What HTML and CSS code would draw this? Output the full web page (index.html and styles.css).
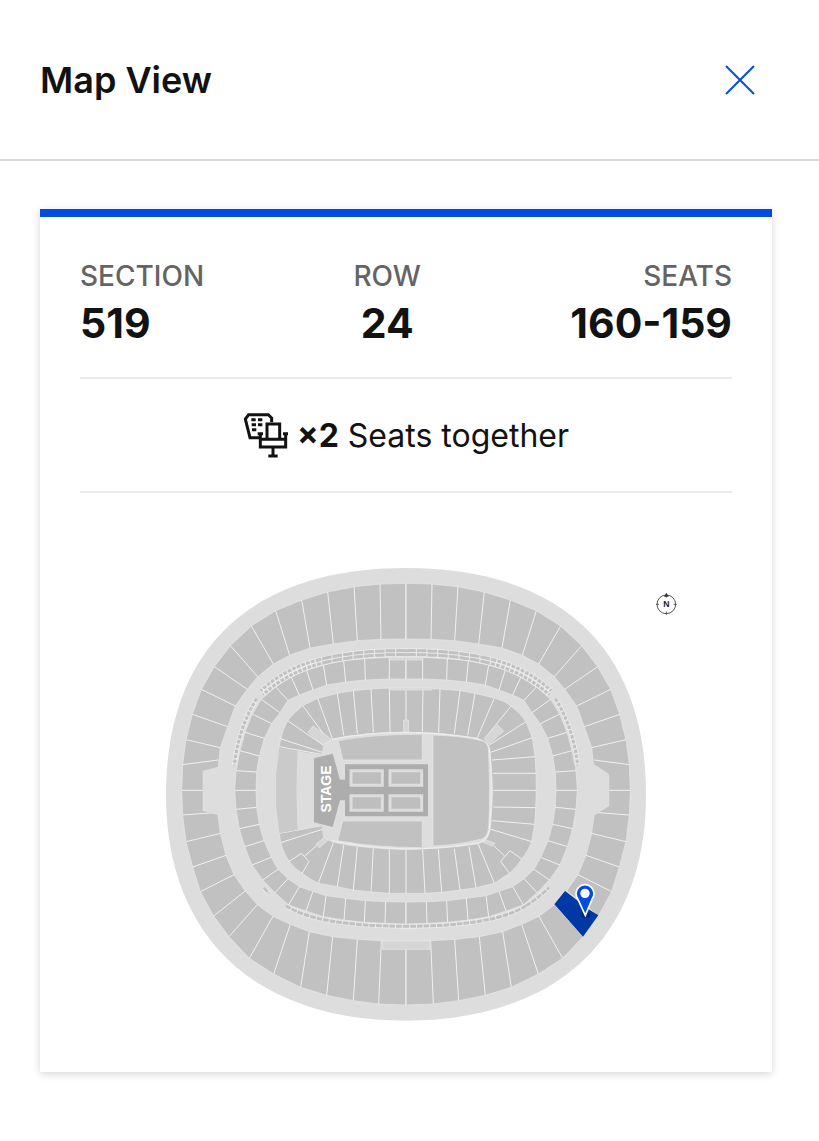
FILE: index.html
```html
<!DOCTYPE html>
<html lang="en">

<head>
    <meta charset="UTF-8">
    <meta name="viewport" content="width=device-width, initial-scale=1.0">
    <title>Map View</title>
    <link rel="stylesheet" href="styles.css">
</head>

<body>
    <header class="header">
        <h1 class="title">Map View</h1>
        <button class="close" type="button" aria-label="Close">
            <svg viewBox="0 0 32 32" width="32" height="32" aria-hidden="true">
                <path d="M2 2L30 30M30 2L2 30"/>
            </svg>
        </button>
    </header>

    <main class="card">
        <dl class="ticket">
            <div class="field">
                <dt>SECTION</dt>
                <dd>519</dd>
            </div>
            <div class="field field-center">
                <dt>ROW</dt>
                <dd>24</dd>
            </div>
            <div class="field field-right">
                <dt>SEATS</dt>
                <dd>160-159</dd>
            </div>
        </dl>

        <div class="together">
            <svg class="seat-icon" viewBox="45 65 138 138" aria-hidden="true">
                <path class="seat-line" d="M95 142H66L52 86L62 73H121L131 83V96"/>
                <path class="seat-fill" d="M70 84h13v9h-13zM90 84h13v9h-13zM71 99h13v9h-13zM90 99h13v9h-13zM72 114h13v9h-13z"/>
                <path class="seat-line" d="M117 145V101H155V145M89 130H105M97 130V170H173V130M165 130H180M97 147H173M135 170V196M121 197H149"/>
            </svg>
            <p><strong>×2</strong> Seats together</p>
        </div>

        <svg class="map" viewBox="-240 -60 1956 1476" role="img" aria-label="Stadium seating map">
            <defs>
                <!-- left half of the stands, reused flipped for the right half -->
                <g id="stand">
                    <path class="seats" d="M739 70L660 72L582 80L503 96L425 120L347 152L274 198L211 257L163 320L124 388L97 463L78 539L68 614L65 691L68 765L78 845L98 921L121 995L161 1068L207 1130L268 1195L341 1242L422 1282L500 1306L580 1322L656 1332L739 1335V1144L664 1142L592 1138L518 1130L448 1115L391 1093L339 1069L292 1034L256 993L222 944L198 886L181 820L174 765L171 691L174 628L181 563L203 500L226 438L262 388L293 350L340 312L389 286L450 264L520 252L592 242L663 238L739 237Z"/>
                    <path class="divider" d="M660 72L663 238M582 80L592 242M503 96L520 252M425 120L450 264M347 152L389 286M274 198L340 312M211 257L293 350M163 320L262 388M124 388L226 438M97 463L203 500M78 539L181 563M68 614L174 600M65 691H171M68 765L174 757M78 845L182 820M98 921L198 886M121 995L222 944M161 1068L256 993M207 1130L292 1034M268 1195L339 1069M341 1242L391 1093M422 1282L448 1115M500 1306L518 1130M580 1322L592 1138M656 1332L664 1142"/>
                    <path class="seats" d="M739 291L688 292L614 296L551 302L490 315L440 330L393 350L346 380L304 418L277 462L255 517L240 572L228 632L224 691L228 748L238 806L254 860L276 915L308 960L345 998L386 1035L438 1053L490 1070L552 1080L613 1087L675 1090L739 1092V1026L677 1025L616 1022L557 1015L498 1007L459 994L418 980L384 956L354 928L334 892L312 842L298 793L290 742L288 691L290 636L298 588L313 535L335 491L360 458L384 421L418 405L459 390L500 375L557 366L616 360L688 357H739Z"/>
                    <path class="divider" d="M688 292V357M614 296L616 360M551 302L557 366M490 315L500 375M440 330L459 390M393 350L418 405M346 380L384 421M304 418L360 458M277 462L335 491M255 517L313 535M240 572L298 588M228 632L290 636M224 691H288M228 748L290 742M238 806L298 793M254 860L312 842M276 915L334 892M308 960L354 928M345 998L384 956M386 1035L418 980M438 1053L459 994M490 1070L498 1007M552 1080L557 1015M613 1087L616 1022M675 1090L677 1025"/>
                    <path class="suite-edge" d="M738 272Q590 270 478 299Q380 322 302 392M738 284Q590 282 482 311Q386 336 308 404M290 416Q236 502 223 616M378 1037Q470 1098 738 1099"/>
                    <path class="suite suite-wide" d="M738 272Q590 270 478 299M738 284Q590 282 482 311"/>
                    <path class="suite suite-small" d="M478 299Q380 322 302 392M482 311Q386 336 308 404M290 416Q236 502 223 616"/>
                    <path class="suite suite-bottom" d="M378 1037Q470 1098 738 1099"/>
                </g>
            </defs>

            <path class="shell" d="M738 24C1191 24 1458 255 1458 705C1458 1130 1191 1382 738 1382C285 1382 18 1130 18 705C18 255 285 24 738 24Z"/>
            <use href="#stand"/>
            <use href="#stand" transform="translate(1476 0) scale(-1 1)"/>
            <path class="divider" d="M738 70V237M738 291V357M738 1026V1092M738 1168V1335"/>
            <path class="shell" d="M176 620L128 632V753L176 766L182 766V620Z"/>
            <path class="shell" d="M1296 612L1302 612L1348 643V738L1300 768H1294Z"/>
            <path class="suite-edge" d="M1098 1037Q1130 1018 1167 983M312 983L326 1000"/>
            <path class="suite suite-bottom" d="M1098 1037Q1130 1018 1167 983M312 983L326 1000"/>
            <path class="gate" d="M688 292H787V300H688ZM668 1143H810V1168H668Z"/>

            <!-- lower bowl -->
            <path class="seats" d="M738 387L688 384L633 387L580 392L532 400L473 415L428 437Q395 465 383 482Q364 516 358 560L348 640V740L358 820L362 848Q370 880 388 905Q405 927 430 942Q450 958 475 970L532 980L580 990L633 996L688 1000H795L845 997L900 990L948 983L1003 970L1048 940Q1072 920 1085 897Q1106 871 1115 845L1124 793L1127 743L1129 691L1128 640L1125 590L1117 533L1098 485Q1082 460 1053 438Q1033 422 1003 414L945 400L900 392L840 387Z"/>
            <path class="divider" d="M580 392L592 521M532 400L551 526M473 415L517 536M428 437L503 538M633 387L640 518M688 384L690 516M383 482L490 556M358 535L490 578M358 560L484 583M738 387V516M789 387L787 515M840 387L836 518M900 392L883 521M945 400L923 526M1003 414L952 533M1053 438L975 535M1098 485L988 555M1117 533L992 577M1125 590L996 600M1128 640L999 640M1129 691H1000M1127 743L1000 741M1124 793L997 782M1115 845L993 808M1085 897L1050 872L1022 904L1048 940M1034 888L1002 858M1003 970L955 853M948 983L927 860M900 990L883 866M845 997L835 868M795 1000L788 870M738 1000V868M688 1000V868M633 996L640 865M580 990L592 860M532 980L551 855M475 970L520 848M358 820L484 797M362 848L490 807M386 905L425 880L447 905L425 942M434 888L470 857"/>
            <path class="closed" d="M358 562L412 573L409 691L412 810L358 820L349 740V640Z"/>
            <path class="shell" d="M412 573L484 585L490 556L500 538L517 536Q620 515 738 515Q850 515 952 533L982 548L992 577L1000 691L993 808L982 835L955 853Q850 869 738 869Q610 868 520 848L490 835L484 797L412 810L409 691Z"/>
            <path class="gate" d="M444 517L459 498L515 538L488 555ZM1013 495L1031 514L986 553L972 535ZM731 480H746V518H731ZM688 384H815V390H688ZM467 853L493 832L505 840L478 863ZM978 840L1005 850L997 859L968 846Z"/>
            <path class="field-edge" d="M515 538Q620 517 738 517Q850 517 952 537Q982 545 988 565Q1000 691 988 812Q982 840 960 848Q850 867 738 867Q620 865 515 842"/>
            <path class="seats" d="M535 542Q640 522 787 523V600H548ZM548 783H787V863Q650 863 533 842ZM819 525Q910 528 965 542Q983 547 985 565Q992 691 986 800Q984 830 965 837Q900 855 819 858Z"/>

            <!-- stage and pits -->
            <path class="stage" d="M462 595L518 581L540 659H555V613H804V769H555V721H540L518 801L462 787Z"/>
            <path class="pit" d="M573 632H667V676H573ZM690 632H785V676H690ZM573 707H667V751H573ZM690 707H785V751H690Z"/>
            <text class="stage-text" transform="translate(513 687) rotate(-90)">STAGE</text>

            <path class="selected" d="M1215 993L1183 1033L1269 1130L1315 1066L1286 1048Z"/>
            <ellipse class="pin-shadow" cx="1276" cy="1065" rx="17" ry="10"/>
            <path class="pin" d="M1276 1066L1254 1018A27 27 0 1 1 1296 1018Z"/>
            <circle class="pin-dot" cx="1275" cy="1000" r="14"/>

            <circle class="compass" cx="1519" cy="133" r="28"/>
            <path class="compass" d="M1488 133H1497M1541 133H1550M1519 155V164M1519 103V113"/>
            <path class="compass-tip" d="M1512 110L1519 98L1526 110Z"/>
            <text class="compass-text" x="1519" y="142">N</text>
        </svg>
    </main>
</body>

</html>
```
FILE: styles.css
```css
* {
    box-sizing: border-box;
}

body {
    margin: 0;
    background-color: #ffffff;
    color: #121212;
    font-family: Inter, "Liberation Sans", sans-serif;
}

.header {
    display: flex;
    justify-content: space-between;
    align-items: center;
    height: 161px;
    padding: 0 55px 0 40px;
    border-bottom: 2px solid #d6d6d6;
}

.title {
    margin: 0;
    font-size: 36px;
    font-weight: 600;
}

.close {
    display: flex;
    justify-content: center;
    align-items: center;
    width: 48px;
    height: 48px;
    padding: 0;
    border: none;
    background: none;
    cursor: pointer;
}

.close path {
    stroke: #024ddf;
    stroke-width: 2;
}

.card {
    margin: 48px 47px 64px 40px;
    padding: 40px;
    border-top: 8px solid #024ddf;
    box-shadow: 0 2px 8px rgba(0, 0, 0, 0.16);
}

.ticket {
    display: flex;
    justify-content: space-between;
    margin: 0;
    padding-bottom: 26px;
    border-bottom: 2px solid #ebebeb;
}

.field-center {
    text-align: center;
}

.field-right {
    text-align: right;
}

.field dt {
    color: #646464;
    font-size: 28px;
    font-weight: 500;
    line-height: 38px;
}

.field dd {
    margin: 0;
    font-size: 41px;
    font-weight: 700;
    line-height: 56px;
}

.together {
    display: flex;
    justify-content: center;
    align-items: center;
    gap: 8px;
    height: 114px;
    border-bottom: 2px solid #ebebeb;
    font-size: 32px;
}

.together p {
    margin: 0;
}

.seat-icon {
    width: 46px;
    height: 46px;
}

.seat-line {
    fill: none;
    stroke: #121212;
    stroke-width: 9;
}

.seat-fill {
    fill: #121212;
}

.map {
    display: block;
    width: 100%;
    margin-top: 47px;
}

.shell {
    fill: #dddddd;
}

.seats {
    fill: #c1c1c1;
    stroke: #e8e8e8;
    stroke-width: 2;
}

.divider {
    fill: none;
    stroke: #f0f0f0;
    stroke-width: 3;
}

.suite-edge {
    fill: none;
    stroke: #ebebeb;
    stroke-width: 14;
}

.suite {
    fill: none;
    stroke: #c1c1c1;
    stroke-width: 9;
}

.suite-wide {
    stroke-dasharray: 29 3;
}

.suite-small {
    stroke-dasharray: 11 4;
}

.suite-bottom {
    stroke-dasharray: 17 3;
}

.gate {
    fill: #d6d6d6;
    stroke: #e8e8e8;
    stroke-width: 2;
}

.closed {
    fill: #cacaca;
}

.field-edge {
    fill: none;
    stroke: #ededed;
    stroke-width: 4;
}

.stage {
    fill: #adadad;
}

.pit {
    fill: #bebebe;
    stroke: #dddddd;
    stroke-width: 9;
}

.stage-text {
    fill: #ffffff;
    font-family: "Liberation Sans", sans-serif;
    font-size: 42px;
    font-weight: 700;
    text-anchor: middle;
}

.selected {
    fill: #0039a6;
}

.pin-shadow {
    fill: #002a7a;
}

.pin {
    fill: #024ddf;
    stroke: #ffffff;
    stroke-width: 5;
}

.pin-dot {
    fill: #ffffff;
}

.compass {
    fill: none;
    stroke: #555555;
    stroke-width: 3;
}

.compass-tip {
    fill: #333333;
}

.compass-text {
    fill: #222222;
    font-family: "Liberation Sans", sans-serif;
    font-size: 26px;
    font-weight: 700;
    text-anchor: middle;
}
```
